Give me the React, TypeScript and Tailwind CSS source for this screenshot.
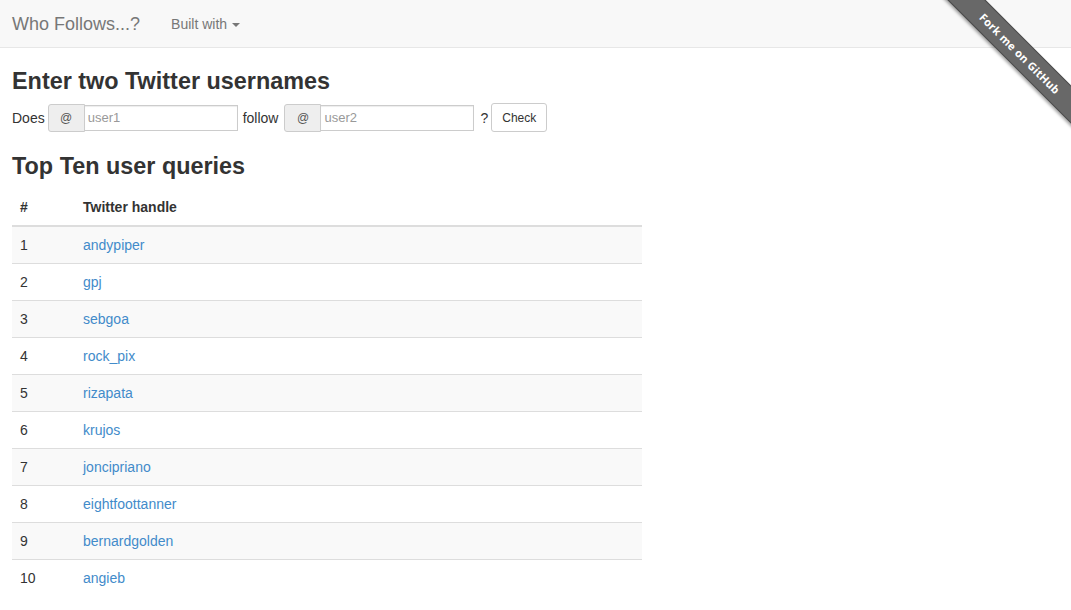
import { useState } from "react";

const users = [
  "andypiper",
  "gpj",
  "sebgoa",
  "rock_pix",
  "rizapata",
  "krujos",
  "joncipriano",
  "eightfoottanner",
  "bernardgolden",
  "angieb",
];

function AtInput({ placeholder }: { placeholder: string }) {
  return (
    <div className="flex items-center">
      <span className="flex h-[28px] w-[37px] items-center justify-center rounded-l-[3px] border border-[#ccc] bg-[#eee] text-[12px] text-[#555]">
        @
      </span>
      <input
        type="text"
        placeholder={placeholder}
        className="h-[26px] w-[153px] border border-l-0 border-[#ccc] bg-white px-[3px] text-[13px] text-[#555] shadow-[inset_0_1px_1px_rgba(0,0,0,0.075)] outline-none placeholder:text-[#999]"
      />
    </div>
  );
}

export default function App() {
  const [open, setOpen] = useState(false);

  return (
    <div className="relative min-h-[610px] overflow-hidden bg-white font-['Liberation_Sans',Arial,sans-serif] text-[14px] leading-[20px] text-[#333]">
      {/* navbar */}
      <div className="flex h-[48px] items-center border-b border-[#e7e7e7] bg-[#f8f8f8] px-3">
        <span className="text-[18px] text-[#777]">Who Follows...?</span>
        <button
          onClick={() => setOpen(!open)}
          className="ml-[31px] flex items-center text-[14px] text-[#777]"
        >
          Built with
          <span className="ml-[5px] mt-[2px] h-0 w-0 border-x-[4px] border-t-[4px] border-x-transparent border-t-[#777]" />
        </button>
      </div>

      {/* ribbon */}
      <div className="absolute right-0 top-0 h-[150px] w-[150px] overflow-hidden">
        <div className="absolute left-[-11px] top-[40px] flex h-[27px] w-[220px] rotate-45 items-center justify-center border-y border-[#4a4a4a] bg-[#686868] shadow-[0_2px_3px_rgba(0,0,0,0.35)]">
          <span className="font-['Open_Sans',sans-serif] text-[11px] font-bold tracking-[0.3px] text-white">
            Fork me on GitHub
          </span>
        </div>
      </div>

      <div className="px-3">
        <h3 className="mt-[20px] mb-[9px] text-[23.4px] leading-[26px] font-bold">
          Enter two Twitter usernames
        </h3>
        <form
          className="flex h-[29px] items-center"
          onSubmit={(e) => e.preventDefault()}
        >
          <span className="mr-[3px]">Does</span>
          <AtInput placeholder="user1" />
          <span className="ml-[5px] mr-[6px]">follow</span>
          <AtInput placeholder="user2" />
          <span className="ml-[6px] mr-[3px]">?</span>
          <button
            type="submit"
            className="h-[29px] w-[56px] rounded-[3px] border border-[#ccc] bg-white text-[12px] text-[#333]"
          >
            Check
          </button>
        </form>

        <h3 className="mt-[21px] mb-[10px] text-[23.4px] leading-[26px] font-bold">
          Top Ten user queries
        </h3>
        <table className="w-[630px] border-collapse text-left">
          <thead>
            <tr className="border-b-2 border-[#ddd]">
              <th className="w-[63px] p-[8px] text-[14px] font-bold">#</th>
              <th className="p-[8px] text-[14px] font-bold">Twitter handle</th>
            </tr>
          </thead>
          <tbody>
            {users.map((u, i) => (
              <tr
                key={u}
                className={`border-t border-[#ddd] ${i % 2 === 0 ? "bg-[#f9f9f9]" : "bg-white"}`}
              >
                <td className="p-[8px] text-[14px]">{i + 1}</td>
                <td className="p-[8px] text-[14px]">
                  <a href="#" className="text-[#428bca]">
                    {u}
                  </a>
                </td>
              </tr>
            ))}
          </tbody>
        </table>
      </div>
    </div>
  );
}
